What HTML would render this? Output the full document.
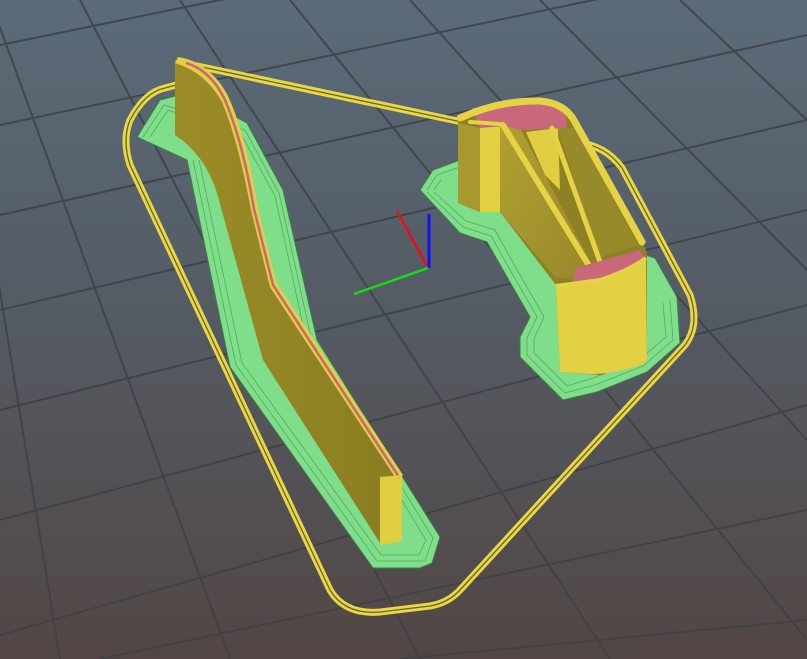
<!DOCTYPE html>
<html><head><style>
html,body{margin:0;padding:0;width:807px;height:659px;overflow:hidden}
</style></head><body>
<svg width="807" height="659" viewBox="0 0 807 659" xmlns="http://www.w3.org/2000/svg">
<defs>
<linearGradient id="bg" x1="0" y1="0" x2="0" y2="1">
<stop offset="0" stop-color="#5b6b79"/>
<stop offset="0.5" stop-color="#545a62"/>
<stop offset="1" stop-color="#524644"/>
</linearGradient>
<linearGradient id="wall" x1="0" y1="0" x2="1" y2="0">
<stop offset="0" stop-color="#9c8c28"/>
<stop offset="1" stop-color="#8a7d22"/>
</linearGradient>
<linearGradient id="mid" x1="0" y1="0" x2="1" y2="1">
<stop offset="0" stop-color="#b0a034"/>
<stop offset="1" stop-color="#968828"/>
</linearGradient>
</defs>
<rect width="807" height="659" fill="url(#bg)"/>
<g stroke="#3e4147" stroke-width="2" fill="none" opacity="0.85">
<line x1="0" y1="45" x2="807" y2="-120"/>
<line x1="0" y1="125" x2="807" y2="-45"/>
<line x1="0" y1="215" x2="807" y2="35"/>
<line x1="0" y1="310" x2="807" y2="120"/>
<line x1="0" y1="410" x2="807" y2="210"/>
<line x1="0" y1="520" x2="807" y2="305"/>
<line x1="0" y1="635" x2="807" y2="405"/>
<line x1="100" y1="659" x2="807" y2="510"/>
<line x1="400" y1="659" x2="807" y2="620"/>
<line x1="-10" y1="0" x2="230" y2="659"/>
<line x1="80" y1="0" x2="420" y2="659"/>
<line x1="180" y1="0" x2="610" y2="659"/>
<line x1="290" y1="0" x2="807" y2="640"/>
<line x1="410" y1="0" x2="807" y2="440"/>
<line x1="540" y1="0" x2="807" y2="270"/>
<line x1="680" y1="0" x2="807" y2="120"/>
<line x1="-10" y1="230" x2="60" y2="659"/>
</g>
<!-- skirt -->
<g fill="none" stroke-linejoin="round" stroke-linecap="round">
<path d="M180 84 L165 88 Q145 92 130 120 Q122 140 130 165 L330 590 Q345 615 380 612 L430 606 Q448 603 460 590 L685 345 Q700 325 690 295 L622 168 Q605 145 578 143 M183 63 L462 122" stroke="#e8d848" stroke-width="7"/>
<path d="M180 84 L165 88 Q145 92 130 120 Q122 140 130 165 L330 590 Q345 615 380 612 L430 606 Q448 603 460 590 L685 345 Q700 325 690 295 L622 168 Q605 145 578 143 M183 63 L462 122" stroke="#6b6420" stroke-width="1.3"/>
</g>
<!-- left brim -->
<path d="M137 137 L160 100 L190 92 L247 123 L283 190 L317 340 L440 537 L432 563 L420 568 L373 568 L230 367 L187 160 Z" fill="#7ede8a" stroke="#3f7a48" stroke-width="1"/>
<g stroke="#4e9a58" stroke-width="0.8" fill="none" opacity="0.8">
<path d="M143 137 L164 105 L245 130 L279 193 L312 342 L433 538 L425 561 L377 561 L236 365 L193 160"/>
<path d="M150 137 L168 110 L242 136 L275 196 L307 344 L426 540 L419 555 L381 555 L242 363 L199 160"/>
</g>
<!-- left wall face -->
<path d="M175 60 Q205 70 222 100 Q240 140 252 210 L270 285 L397 477 L380 477 L380 543 L263 360 L217 193 Q205 155 175 135 Z" fill="url(#wall)"/>
<path d="M178 57 Q210 62 228 96 Q246 135 258 208 L276 282 L403 475 L397 480 L270 287 L251 210 Q238 140 222 102 Q205 72 175 63 Z" fill="#e2cf42"/>
<path d="M186 63 Q210 70 224 98 Q242 138 254 209 L273 285 L399 477" fill="none" stroke="#c8687a" stroke-width="2.6"/>
<path d="M380 477 L402 475 L402 541 L380 545 Z" fill="#e0cd40"/>
<!-- right brim -->
<path d="M420 190 L433 170 L460 160 L500 175 L600 240 L655 258 L677 297 L680 343 L647 372 L597 392 L563 400 L520 357 L520 337 L530 317 L503 270 L487 242 L460 233 Z" fill="#7ede8a" stroke="#3f7a48" stroke-width="1"/>
<g stroke="#4e9a58" stroke-width="0.8" fill="none" opacity="0.8">
<path d="M427 190 L437 175 L460 167 M670 300 L673 340 L643 366 L595 385 L565 393 L527 355 L527 338 L537 317 L509 268 L491 236 L463 227 L427 192"/>
<path d="M434 190 L441 180 M663 303 L666 337 L639 360 L593 378 L567 386 L534 353 L534 339 L544 317 L515 266 L495 230 L466 221 L434 192"/>
</g>
<!-- right part -->
<path d="M458 120 L520 100 L556 104 L575 122 L642 240 L647 253 L647 362 L600 375 L560 372 L556 285 L500 212 L480 212 L458 203 Z" fill="#8e8024"/>
<path d="M458 123 L480 128 L480 212 L458 203 Z" fill="#a89830"/>
<path d="M480 126 L500 124 L500 212 L480 212 Z" fill="#e2cf42"/>
<path d="M500 122 L520 128 L595 270 L588 282 L555 277 L500 212 Z" fill="url(#mid)"/>
<path d="M526 132 L558 128 L560 190 L545 175 Z" fill="#e0cd40"/>
<path d="M558 128 L575 128 L638 245 L598 258 Z" fill="#978a2a"/>
<path d="M472 108 L540 101 L565 110 L567 128 L520 130 L505 126 L480 128 Z" fill="#c8687a"/>
<g fill="none" stroke="#e6d345" stroke-linecap="round" stroke-linejoin="round">
<path d="M460 118 Q500 100 540 101 Q565 103 575 122 L642 242" stroke-width="7"/>
<path d="M503 125 L594 274" stroke-width="6"/>
<path d="M552 128 L600 262" stroke-width="5"/>
<path d="M470 122 L500 124" stroke-width="4"/>
</g>
<path d="M575 268 L640 250 L646 262 L600 282 L572 290 Z" fill="#c8687a"/>
<path d="M556 286 L600 280 Q630 270 646 258 L647 362 Q620 374 590 374 L560 372 Z" fill="#e4d143"/>
<path d="M556 286 L600 280 Q630 270 646 258" fill="none" stroke="#e6d345" stroke-width="4"/>
<!-- axes -->
<line x1="429" y1="214" x2="429" y2="268" stroke="#1010ff" stroke-width="3"/>
<line x1="397" y1="211" x2="427" y2="266" stroke="#e81010" stroke-width="2.5"/>
<line x1="354" y1="294" x2="428" y2="268" stroke="#10e010" stroke-width="2.5"/>
</svg>
</body></html>
